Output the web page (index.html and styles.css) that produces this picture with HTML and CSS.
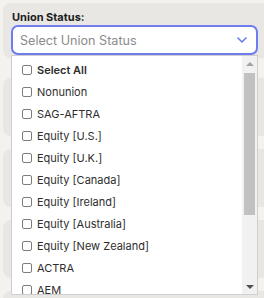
FILE: index.html
```html
<!DOCTYPE html>
<html>
<head>
<meta charset="utf-8">
<link rel="stylesheet" href="styles.css">
</head>
<body>
<div class="page">
  <div class="field">
    <div class="label">Union Status:</div>
    <div class="select">
      <span class="placeholder">Select Union Status</span>
      <svg class="chev" width="10" height="6" viewBox="0 0 10 6"><path d="M1 1l4 4 4-4" fill="none" stroke="#6b78ee" stroke-width="1.6" stroke-linecap="round" stroke-linejoin="round"/></svg>
    </div>
    <div class="menu">
      <div class="list">
        <div class="item all"><span class="box"></span>Select All</div>
        <div class="item"><span class="box"></span>Nonunion</div>
        <div class="item"><span class="box"></span>SAG-AFTRA</div>
        <div class="item"><span class="box"></span>Equity [U.S.]</div>
        <div class="item"><span class="box"></span>Equity [U.K.]</div>
        <div class="item"><span class="box"></span>Equity [Canada]</div>
        <div class="item"><span class="box"></span>Equity [Ireland]</div>
        <div class="item"><span class="box"></span>Equity [Australia]</div>
        <div class="item"><span class="box"></span>Equity [New Zealand]</div>
        <div class="item"><span class="box"></span>ACTRA</div>
        <div class="item"><span class="box"></span>AEM</div>
      </div>
      <div class="sbar">
        <div class="sbtn"><svg width="8" height="4" viewBox="0 0 8 4"><path d="M0 4L4 0L8 4Z" fill="#a3a3a3"/></svg></div>
        <div class="strack"><div class="thumb"></div></div>
        <div class="sbtn"><svg width="8" height="4" viewBox="0 0 8 4"><path d="M0 0L8 0L4 4Z" fill="#505050"/></svg></div>
      </div>
    </div>
  </div>
  <div class="card"></div>
  <div class="card"></div>
  <div class="card"></div>
  <div class="card"></div>
</div>
</body>
</html>
```
FILE: styles.css
```css
* { box-sizing: border-box; }
html, body { margin: 0; padding: 0; }
body {
  background: #f3f2ee;
  font-family: Inter, "Noto Sans", sans-serif;
  overflow: hidden;
  width: 264px;
  height: 298px;
}
.page {
  padding: 3px 0 0 3px;
  display: flex;
  flex-direction: column;
  gap: 13px;
}
.field {
  position: relative;
  background: #e8e7e3;
  border-radius: 8px 0 0 8px;
  padding: 8px 6px 4px 8px;
  height: 55px;
  margin-bottom: 7px;
}
.label {
  font-size: 11px;
  font-weight: 700;
  color: #1c1c1c;
  line-height: 13px;
  margin-left: 1px;
}
.select {
  margin-top: 1px;
  height: 30px;
  width: 247px;
  border: 2px solid #6f7cf0;
  border-radius: 7px;
  background: #fff;
  display: flex;
  align-items: center;
  justify-content: space-between;
  padding: 0 9px 0 7px;
}
.placeholder {
  font-size: 12.6px;
  color: #8b8b8b;
}
.chev { display: block; }
.menu {
  position: absolute;
  left: 8px;
  top: 52px;
  width: 247px;
  height: 240px;
  background: #fff;
  border: 1px solid #cfcfcf;
  overflow: hidden;
  display: flex;
}
.list {
  flex: 1;
  padding-top: 3px;
  overflow: hidden;
}
.item {
  height: 22px;
  display: flex;
  align-items: center;
  padding-left: 10px;
  font-size: 11px;
  color: #2e2e2e;
  white-space: nowrap;
}
.item.all { font-weight: 600; }
.box {
  width: 10px;
  height: 10px;
  border: 1px solid #7d7d7d;
  border-radius: 2px;
  margin-right: 5px;
  flex: none;
}
.sbar {
  width: 15px;
  flex: none;
  background: #f1f1f1;
  display: flex;
  flex-direction: column;
}
.sbtn {
  height: 15px;
  flex: none;
  display: flex;
  align-items: center;
  justify-content: center;
}
.sbtn svg { display: block; }
.strack {
  flex: 1;
  padding: 2px 2px 0 2px;
}
.thumb {
  height: 142px;
  background: #c1c1c1;
}
.card {
  height: 58px;
  background: #e8e7e3;
  border-radius: 8px 0 0 8px;
}
```
